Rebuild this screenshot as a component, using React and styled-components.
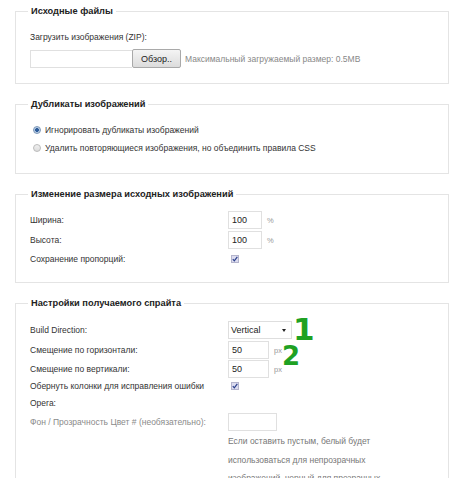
import React from "react";
import styled, { createGlobalStyle } from "styled-components";

const GlobalStyle = createGlobalStyle`
    html, body {
        margin: 0;
        padding: 0;
        background: #fff;
    }
    body {
        font-family: "Liberation Sans", Arial, sans-serif;
        font-size: 8.5px;
        color: #333;
    }
`;

const Page = styled.div`
    padding: 4px 1px 0 15px;
    width: 450px;
    box-sizing: border-box;
    overflow: hidden;
`;

const Fieldset = styled.fieldset`
    margin: 0 0 ${ ( { gap } ) => gap ?? 13 }px 0;
    padding: ${ ( { pt } ) => pt ?? 10 }px 14px ${ ( { pb } ) => pb ?? 15 }px 14px;
    border: 1px solid #e4e4e4;
    min-width: 0;
`;

const Legend = styled.legend`
    margin-left: -2px;
    padding: 0 3px;
    font-size: 9.25px;
    font-weight: bold;
    line-height: 14px;
    color: #222;
`;

const Line = styled.div`
    line-height: 18px;
    height: 18px;
`;

const UploadRow = styled.div`
    display: flex;
    align-items: center;
    margin-top: 3px;
    height: 19px;
`;

const FileField = styled.div`
    width: 101px;
    height: 16px;
    border: 1px solid #e0e0e0;
    border-right: none;
`;

const BrowseButton = styled.button`
    width: 49px;
    height: 19px;
    padding: 0;
    border: 1px solid #a9a9a9;
    border-radius: 2px;
    background: linear-gradient(#f4f4f4, #dcdcdc);
    font-family: "Liberation Sans", Arial, sans-serif;
    font-size: 9px;
    color: #222;
`;

const Hint = styled.span`
    margin-left: 4px;
    color: #888;
`;

const RadioLine = styled.label`
    display: flex;
    align-items: center;
    height: 18px;
    padding-left: 3px;
`;

const Radio = styled.span`
    width: 6px;
    height: 6px;
    border-radius: 50%;
    border: 1px solid ${ ( { checked } ) => ( checked ? "#7d98b8" : "#bbb" ) };
    background: ${ ( { checked } ) => ( checked
        ? "radial-gradient(circle, #2d5c9a 0 1.6px, #b8cce4 2.2px)"
        : "linear-gradient(#f0f0f0, #dcdcdc)" ) };
    margin-right: 4px;
`;

const Row = styled.div`
    display: flex;
    align-items: ${ ( { top } ) => ( top ? "flex-start" : "center" ) };
    height: ${ ( { h } ) => ( h ? `${ h }px` : "auto" ) };
    position: relative;
`;

const Label = styled.div`
    width: 198px;
    flex: none;
    line-height: ${ ( { lh } ) => lh ?? 17 }px;
    color: ${ ( { muted } ) => ( muted ? "#8a8a8a" : "#333" ) };
`;

const TextInput = styled.div`
    width: ${ ( { w } ) => w }px;
    height: 16px;
    border: 1px solid #e0e0e0;
    box-sizing: content-box;
    padding: 0 0 0 3px;
    line-height: 16px;
    font-size: 9px;
    color: #222;
`;

const Unit = styled.span`
    margin-left: 5px;
    font-size: 7.5px;
    color: #999;
`;

const Check = styled.span`
    display: inline-flex;
    align-items: center;
    justify-content: center;
    width: 8px;
    height: 8px;
    margin: ${ ( { mt } ) => mt ?? 0 }px 0 0 3px;
    border: 1px solid #b4b4cc;
    background: #dcdcef;
    box-sizing: border-box;
`;

const Select = styled.div`
    display: flex;
    align-items: center;
    justify-content: space-between;
    width: 64px;
    height: 18px;
    box-sizing: border-box;
    padding: 0 5px 0 2px;
    border: 1px solid #dedede;
    font-size: 9px;
    color: #222;
`;

const Arrow = styled.span`
    width: 0;
    height: 0;
    border-left: 2.5px solid transparent;
    border-right: 2.5px solid transparent;
    border-top: 3px solid #222;
`;

const Mark = styled.span`
    position: absolute;
    left: ${ ( { x } ) => x }px;
    top: ${ ( { y } ) => y }px;
    font-family: "DejaVu Sans", sans-serif;
    font-weight: bold;
    font-size: ${ ( { size } ) => size }px;
    line-height: 1;
    color: #1fa123;
`;

const Help = styled.div`
    margin-left: 198px;
    width: 170px;
    line-height: 18.5px;
    color: #777;
`;

const Tick = () => (
    <svg width="6" height="6" viewBox="0 0 6 6">
        <path d="M0.8 3.2 L2.3 4.8 L5.3 0.8" fill="none" stroke="#2a3f8a" strokeWidth="1.2" />
    </svg>
);

const App = () => (
    <>
        <GlobalStyle />
        <Page>
            <Fieldset pb={ 15 }>
                <Legend>Исходные файлы</Legend>
                <Line>Загрузить изображения (ZIP):</Line>
                <UploadRow>
                    <FileField />
                    <BrowseButton>Обзор..</BrowseButton>
                    <Hint>Максимальный загружаемый размер: 0.5MB</Hint>
                </UploadRow>
            </Fieldset>

            <Fieldset pb={ 16 }>
                <Legend>Дубликаты изображений</Legend>
                <RadioLine><Radio checked />Игнорировать дубликаты изображений</RadioLine>
                <RadioLine><Radio />Удалить повторяющиеся изображения, но объединить правила CSS</RadioLine>
            </Fieldset>

            <Fieldset pt={ 9 } pb={ 14 } gap={ 13 }>
                <Legend>Изменение размера исходных изображений</Legend>
                <Row h={ 20 }>
                    <Label>Ширина:</Label>
                    <TextInput w={ 29 }>100</TextInput>
                    <Unit>%</Unit>
                </Row>
                <Row h={ 20 }>
                    <Label>Высота:</Label>
                    <TextInput w={ 29 }>100</TextInput>
                    <Unit>%</Unit>
                </Row>
                <Row h={ 18 }>
                    <Label>Сохранение пропорций:</Label>
                    <Check><Tick /></Check>
                </Row>
            </Fieldset>

            <Fieldset pt={ 10 } pb={ 0 } gap={ 0 }>
                <Legend>Настройки получаемого спрайта</Legend>
                <Row h={ 20 }>
                    <Label>Build Direction:</Label>
                    <Select>Vertical<Arrow /></Select>
                    <Mark x={ 293 - 30 } y={ -6 } size={ 31 }>1</Mark>
                </Row>
                <Row h={ 20 }>
                    <Label>Смещение по горизонтали:</Label>
                    <TextInput w={ 36 }>50</TextInput>
                    <Unit>px</Unit>
                    <Mark x={ 282 - 30 } y={ 3 } size={ 26 }>2</Mark>
                </Row>
                <Row h={ 18 }>
                    <Label>Смещение по вертикали:</Label>
                    <TextInput w={ 36 }>50</TextInput>
                    <Unit>px</Unit>
                </Row>
                <Row top>
                    <Label>Обернуть колонки для исправления ошибки Opera:</Label>
                    <Check mt={ 4 }><Tick /></Check>
                </Row>
                <Row h={ 20 }>
                    <Label muted>Фон / Прозрачность Цвет # (необязательно):</Label>
                    <TextInput w={ 44 } />
                </Row>
                <Help>
                    Если оставить пустым, белый будет использоваться для непрозрачных изображений, черный для прозрачных
                </Help>
            </Fieldset>
        </Page>
    </>
);

export default App;
